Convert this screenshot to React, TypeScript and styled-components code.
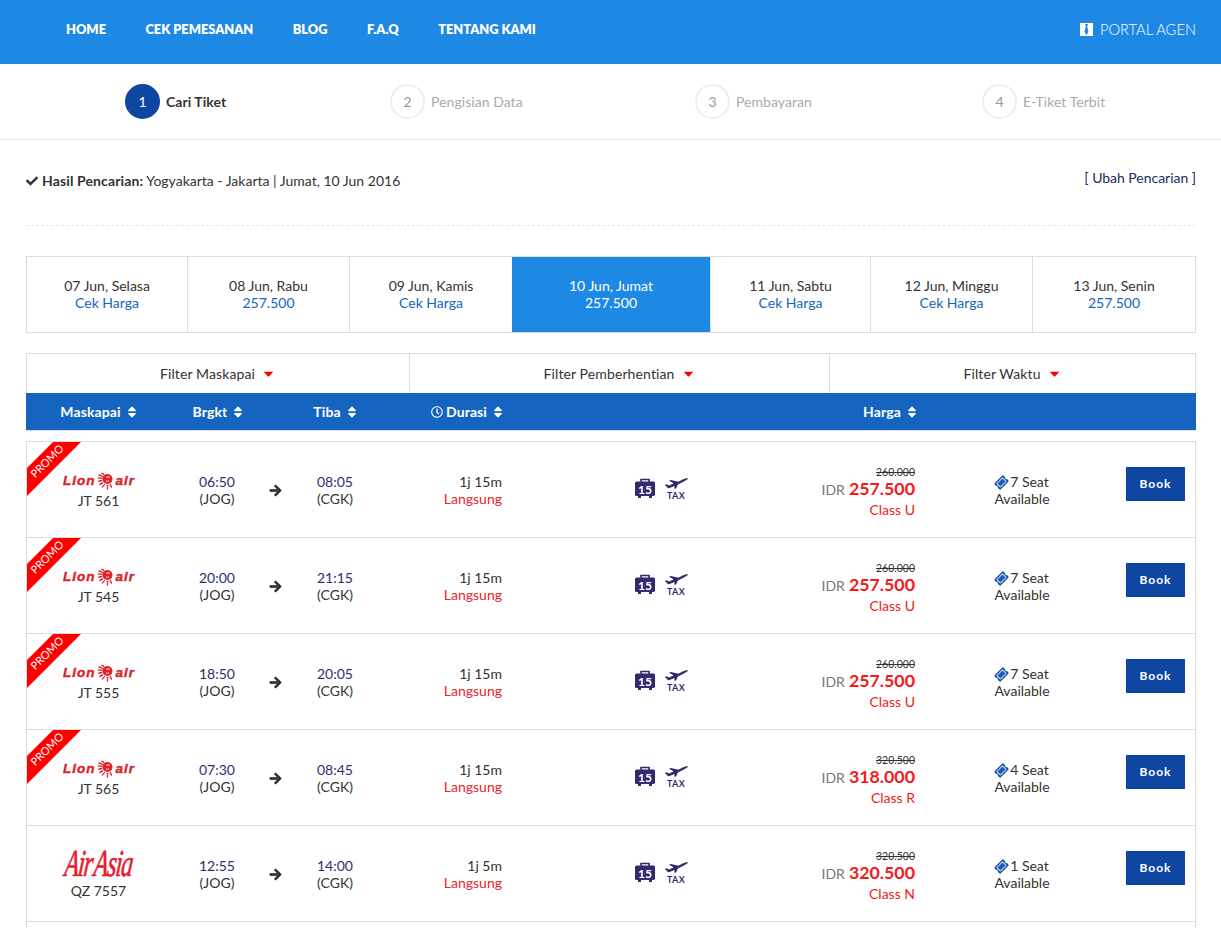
import React from "react";
import styled, { createGlobalStyle } from "styled-components";
import { FaCheck, FaArrowRight, FaSort, FaRegClock, FaCaretDown, FaTicketAlt } from "react-icons/fa";

const Global = createGlobalStyle`
  html, body { margin: 0; padding: 0; background: #fff; overflow: hidden; height: 928px; }
  body { font-family: "Lato", "Liberation Sans", sans-serif; font-size: 14px; color: #333; }
  * { box-sizing: border-box; }
`;

const Page = styled.div`width: 1221px;`;
const Nav = styled.header`
  height: 64px; background: #1e88e5; display: flex; align-items: flex-start; justify-content: space-between;
  padding: 21px 25px 0 66px; color: #fff;
`;
const NavLinks = styled.nav`display: flex; gap: 39.5px;`;
const NavLink = styled.a`font: 800 12.8px/17px "Lato", sans-serif; text-transform: uppercase; color: #fff;`;
const Portal = styled.a`display: flex; align-items: center; gap: 7px; font: 300 14.7px/17px "Lato", sans-serif; color: #fff;`;

const Steps = styled.div`
  height: 76px; border-bottom: 1px solid #e8e8e8; display: grid;
  grid-template-columns: 265px 305px 287px auto; padding: 20px 0 0 125px;
`;
const Step = styled.div`display: flex; align-items: center; align-self: start; gap: 6px; height: 35px;`;
const StepNum = styled.span<{ $on?: boolean }>`
  width: 35px; height: 35px; border-radius: 50%; display: flex; align-items: center; justify-content: center; font-size: 14px;
  background: ${p => (p.$on ? "#0d47a1" : "#fff")}; color: ${p => (p.$on ? "#fff" : "#999")};
  border: 2px solid ${p => (p.$on ? "#0d47a1" : "#eee")};
`;
const StepLabel = styled.span<{ $on?: boolean }>`
  font-size: 14px; letter-spacing: .05px; font-weight: ${p => (p.$on ? 700 : 400)}; color: ${p => (p.$on ? "#333" : "#aaa")};
`;

const Content = styled.main`padding: 0 25px 0 26px;`;
const Summary = styled.div`
  height: 86px; border-bottom: 1px dashed #e6e6e6; display: flex; justify-content: space-between; align-items: flex-start; padding-top: 29px;
`;
const SummaryText = styled.div`font-size: 14px; line-height: 22px; padding-top: 1px; svg { font-size: 12px; margin-right: 4px; vertical-align: -1px; } b { font-weight: 700; letter-spacing: .12px; }`;
const Change = styled.a`font-size: 14px; line-height: 17px; color: #1a2c5e; letter-spacing: -.03px;`;

const Dates = styled.div`
  margin-top: 30px; height: 77px; display: grid; grid-template-columns: 160px 162px 163px 198px 160px 162px 163px; border: 1px solid #ddd;
`;
const DateCell = styled.div<{ $on?: boolean }>`
  display: flex; flex-direction: column; align-items: center; justify-content: center; line-height: 17px; font-size: 14px; padding-bottom: 2px;
  background: ${p => (p.$on ? "#1e88e5" : "#fff")}; color: ${p => (p.$on ? "#fff" : "#333")};
  border-left: ${p => (p.$on ? "0" : "1px solid #ddd")};
  &:first-child { border-left: 0; }
`;
const DatePrice = styled.span<{ $on?: boolean }>`color: ${p => (p.$on ? "#fff" : "#1565c0")};`;

const Filters = styled.div`
  margin-top: 20px; height: 40px; display: grid; grid-template-columns: 382px 420px 366px; border: 1px solid #ddd; border-bottom: 0;
`;
const Filter = styled.div`
  display: flex; align-items: center; justify-content: center; gap: 6px; font-size: 14px; letter-spacing: .12px; border-left: 1px solid #ddd;
  &:first-child { border-left: 0; }
  svg { color: #f00; font-size: 15px; }
`;

const HeadRow = styled.div`
  height: 38px; background: #1565c0; color: #fff; font-weight: 700; font-size: 14px; letter-spacing: .1px; display: grid;
  grid-template-columns: 145px 94px 22px 96px 168px 200px 278px 1fr; align-items: center; border-bottom: 1px solid #ddd; padding-left: 1px;
`;
const HeadCell = styled.span`
  display: flex; align-items: center; justify-content: center; gap: 4px;
  svg { font-size: 14px; }
`;
const ClockIcon = styled(FaRegClock)`&& { font-size: 12px; margin-right: -1px; }`;

const Rows = styled.div`margin-top: 10px; border: 1px solid #ddd; border-bottom: 0;`;
const Row = styled.div`
  position: relative; height: 96px; border-bottom: 1px solid #ddd; display: grid;
  grid-template-columns: 143px 94px 23px 96px 119px 198px 230px 184px 81px; align-items: start; overflow: hidden;
`;
const Ribbon = styled.div`
  position: absolute; left: 0; top: 0; width: 54px; height: 54px; background: #f00;
  clip-path: polygon(26px 0, 54px 0, 0 54px, 0 26px);
`;
const RibbonText = styled.span`
  position: absolute; left: -2px; top: 12px; width: 44px; text-align: center; transform: rotate(-45deg);
  font-size: 11px; line-height: 14px; color: #fff;
`;
const AirlineCell = styled.div<{ $top: number }>`display: flex; flex-direction: column; align-items: center; padding-top: ${p => p.$top}px;`;
const Code = styled.span`font-size: 14px; line-height: 17px; color: #333;`;
const LionLogo = styled.div`
  display: flex; align-items: center; height: 21px; margin: 0 0 1px 1px; color: #e0202c; gap: 2px;
  font: italic 700 13.5px/21px "Liberation Sans", sans-serif; letter-spacing: 1px; -webkit-text-stroke: .4px #e0202c;
`;
const AirAsia = styled.div`
  font: italic 400 33px/30px "Liberation Serif", serif; color: #e5202e; letter-spacing: -1.5px; word-spacing: -3px;
  -webkit-text-stroke: .6px #e5202e; transform: scale(.72, 1.15) skewX(-10deg); margin-bottom: 4px; white-space: nowrap;
`;
const TimeCell = styled.div`
  display: flex; flex-direction: column; align-items: center; padding-top: 31px; line-height: 17px; font-size: 14px; color: #2c2f6e;
  span:last-child { color: #333; }
`;
const ArrowCell = styled.div`display: flex; justify-content: center; padding-top: 42px; font-size: 13px; color: #333; svg { stroke: #333; stroke-width: 30px; }`;
const DurCell = styled.div`text-align: right; padding-top: 31px; line-height: 17px;`;
const Direct = styled.div`color: #e4282c;`;
const IconCell = styled.div`display: flex; align-items: flex-start; padding: 36px 0 0 133px; gap: 9px;`;
const TaxWrap = styled.div`display: flex; flex-direction: column; align-items: center; width: 24px;`;
const TaxText = styled.span`font-size: 9px; line-height: 9px; font-weight: 700; color: #33296f; margin-top: 2px; letter-spacing: .3px;`;
const Bag = styled.div`position: relative; width: 20px; height: 20px; color: #fff;`;
const BagNum = styled.span`
  position: absolute; left: 0; right: 0; top: 6px; text-align: center; font-size: 12px; line-height: 12px; font-weight: 700; color: #fff;
`;
const PriceCell = styled.div`display: flex; flex-direction: column; align-items: flex-end; padding: 24px 15px 0 0;`;
const OldPrice = styled.s`font-size: 10.5px; line-height: 12px; color: #333;`;
const PriceLine = styled.div`display: flex; align-items: baseline; gap: 4px; line-height: 20px;`;
const Idr = styled.span`font-size: 14px; color: #777;`;
const Amount = styled.span`font-size: 17.8px; font-weight: 700; color: #f01c1c;`;
const ClassName = styled.span`font-size: 14px; line-height: 17px; color: #f01c1c; margin-top: 1px;`;
const SeatCell = styled.div`text-align: center; padding-top: 31px; line-height: 17px; svg { color: #1a58b5; font-size: 13px; transform: rotate(-45deg); vertical-align: -2px; margin-right: 2px; }`;
const BookCell = styled.div`padding: 25px 10px 0 12px;`;
const Book = styled.button`
  width: 59px; height: 34px; border: 0; background: #0d47a1; color: #fff; font: 700 12px/34px "Lato", sans-serif; letter-spacing: 1px; padding: 0;
`;

const Tie = () => (
  <svg width="13" height="13" viewBox="0 0 13 13"><path fill="#fff" d="M0 0h13v13H0z" /><path fill="#1e88e5" d="M5 1h3L7.2 3.5 8.5 9 6.5 12 4.5 9 5.8 3.5z" /></svg>
);
const BagSvg = () => (
  <svg width="20" height="20" viewBox="0 0 20 20">
    <path fill="none" stroke="#33296f" strokeWidth="1.6" d="M6 4V1.5h8V4" />
    <rect x="0" y="3.5" width="20" height="14.5" rx="1.5" fill="#33296f" />
    <path fill="#33296f" d="M3 18h3v2H3zM14 18h3v2h-3z" />
  </svg>
);
const PlaneSvg = () => (
  <svg width="23" height="11" viewBox="0 0 23 11" style={{ display: "block" }}>
    <path fill="#33296f" d="M0 7l1.6-.7 2.6 1.1 4.4-2.1L4 2.8 6 2l7.2 1.7 5-2.4c1.6-.7 4-1.5 4.7-.9.4.5-1 1.5-2.6 2.3L12.6 6.7l-1.3 3.5-2 .8.2-3L4.6 10c-.8.3-1.4.2-2-.3z" />
  </svg>
);
const LionMark = () => (
  <svg width="16" height="18" viewBox="0 0 16 18">
    <circle cx="10.5" cy="7" r="5" fill="#e0202c" />
    <path fill="none" stroke="#e0202c" strokeWidth="1.3" d="M7.5 3.5C6.5 2 5.5 1.2 4.5.8M6 5C4.5 3.5 3 3 1.5 3M5.5 7C4 6 2.5 5.8 .8 6M5.5 9C4 8.5 2.5 8.7 1 9.5M6.2 11C5 11 3.5 11.5 2.5 12.8M8 12.5C7 13 6 14 5.2 15.5M10.5 13v4.5M13 12c.5 1.5.8 2.5 1.8 3.5" />
    <path fill="none" stroke="#fff" strokeWidth=".9" d="M9 5.5c1.5-1 3-.8 4 0M12 8.5c-1 1-2 1-3 .5" />
  </svg>
);

type F = { promo?: boolean; air?: boolean; code: string; dep: string; arr: string; dur: string; old: string; price: string; cls: string; seat: number };
const flights: F[] = [
  { promo: true, code: "JT 561", dep: "06:50", arr: "08:05", dur: "1j 15m", old: "260.000", price: "257.500", cls: "Class U", seat: 7 },
  { promo: true, code: "JT 545", dep: "20:00", arr: "21:15", dur: "1j 15m", old: "260.000", price: "257.500", cls: "Class U", seat: 7 },
  { promo: true, code: "JT 555", dep: "18:50", arr: "20:05", dur: "1j 15m", old: "260.000", price: "257.500", cls: "Class U", seat: 7 },
  { promo: true, code: "JT 565", dep: "07:30", arr: "08:45", dur: "1j 15m", old: "320.500", price: "318.000", cls: "Class R", seat: 4 },
  { air: true, code: "QZ 7557", dep: "12:55", arr: "14:00", dur: "1j 5m", old: "320.500", price: "320.500", cls: "Class N", seat: 1 },
];
const dates = [
  ["07 Jun, Selasa", "Cek Harga"], ["08 Jun, Rabu", "257.500"], ["09 Jun, Kamis", "Cek Harga"], ["10 Jun, Jumat", "257.500"],
  ["11 Jun, Sabtu", "Cek Harga"], ["12 Jun, Minggu", "Cek Harga"], ["13 Jun, Senin", "257.500"],
];

export default function App() {
  return (
    <Page>
      <Global />
      <Nav>
        <NavLinks>
          {["Home", "Cek Pemesanan", "Blog", "F.A.Q", "Tentang Kami"].map(n => <NavLink key={n}>{n}</NavLink>)}
        </NavLinks>
        <Portal><Tie />PORTAL AGEN</Portal>
      </Nav>
      <Steps>
        {["Cari Tiket", "Pengisian Data", "Pembayaran", "E-Tiket Terbit"].map((s, i) => (
          <Step key={s}><StepNum $on={i === 0}>{i + 1}</StepNum><StepLabel $on={i === 0}>{s}</StepLabel></Step>
        ))}
      </Steps>
      <Content>
        <Summary>
          <SummaryText><FaCheck /><b>Hasil Pencarian:</b> Yogyakarta - Jakarta | Jumat, 10 Jun 2016</SummaryText>
          <Change>[ Ubah Pencarian ]</Change>
        </Summary>
        <Dates>
          {dates.map((d, i) => (
            <DateCell key={d[0]} $on={i === 3}><span>{d[0]}</span><DatePrice $on={i === 3}>{d[1]}</DatePrice></DateCell>
          ))}
        </Dates>
        <Filters>
          {["Filter Maskapai", "Filter Pemberhentian", "Filter Waktu"].map(f => <Filter key={f}>{f} <FaCaretDown /></Filter>)}
        </Filters>
        <HeadRow>
          <HeadCell>Maskapai <FaSort /></HeadCell>
          <HeadCell>Brgkt <FaSort /></HeadCell>
          <span />
          <HeadCell>Tiba <FaSort /></HeadCell>
          <HeadCell><ClockIcon />Durasi <FaSort /></HeadCell>
          <span />
          <HeadCell>Harga <FaSort /></HeadCell>
          <span />
        </HeadRow>
        <Rows>
          {flights.map(f => (
            <Row key={f.code}>
              {f.promo && <Ribbon />}
              {f.promo && <RibbonText>PROMO</RibbonText>}
              {f.air ? (
                <AirlineCell $top={22}><AirAsia>Air Asia</AirAsia><Code>{f.code}</Code></AirlineCell>
              ) : (
                <AirlineCell $top={28}><LionLogo>Lion<LionMark />air</LionLogo><Code>{f.code}</Code></AirlineCell>
              )}
              <TimeCell><span>{f.dep}</span><span>(JOG)</span></TimeCell>
              <ArrowCell><FaArrowRight /></ArrowCell>
              <TimeCell><span>{f.arr}</span><span>(CGK)</span></TimeCell>
              <DurCell><div>{f.dur}</div><Direct>Langsung</Direct></DurCell>
              <IconCell>
                <Bag><BagSvg /><BagNum>15</BagNum></Bag>
                <TaxWrap><PlaneSvg /><TaxText>TAX</TaxText></TaxWrap>
              </IconCell>
              <PriceCell>
                <OldPrice>{f.old}</OldPrice>
                <PriceLine><Idr>IDR</Idr><Amount>{f.price}</Amount></PriceLine>
                <ClassName>{f.cls}</ClassName>
              </PriceCell>
              <SeatCell><FaTicketAlt />{f.seat} Seat<br />Available</SeatCell>
              <BookCell><Book>Book</Book></BookCell>
            </Row>
          ))}
          <Row />
        </Rows>
      </Content>
    </Page>
  );
}
